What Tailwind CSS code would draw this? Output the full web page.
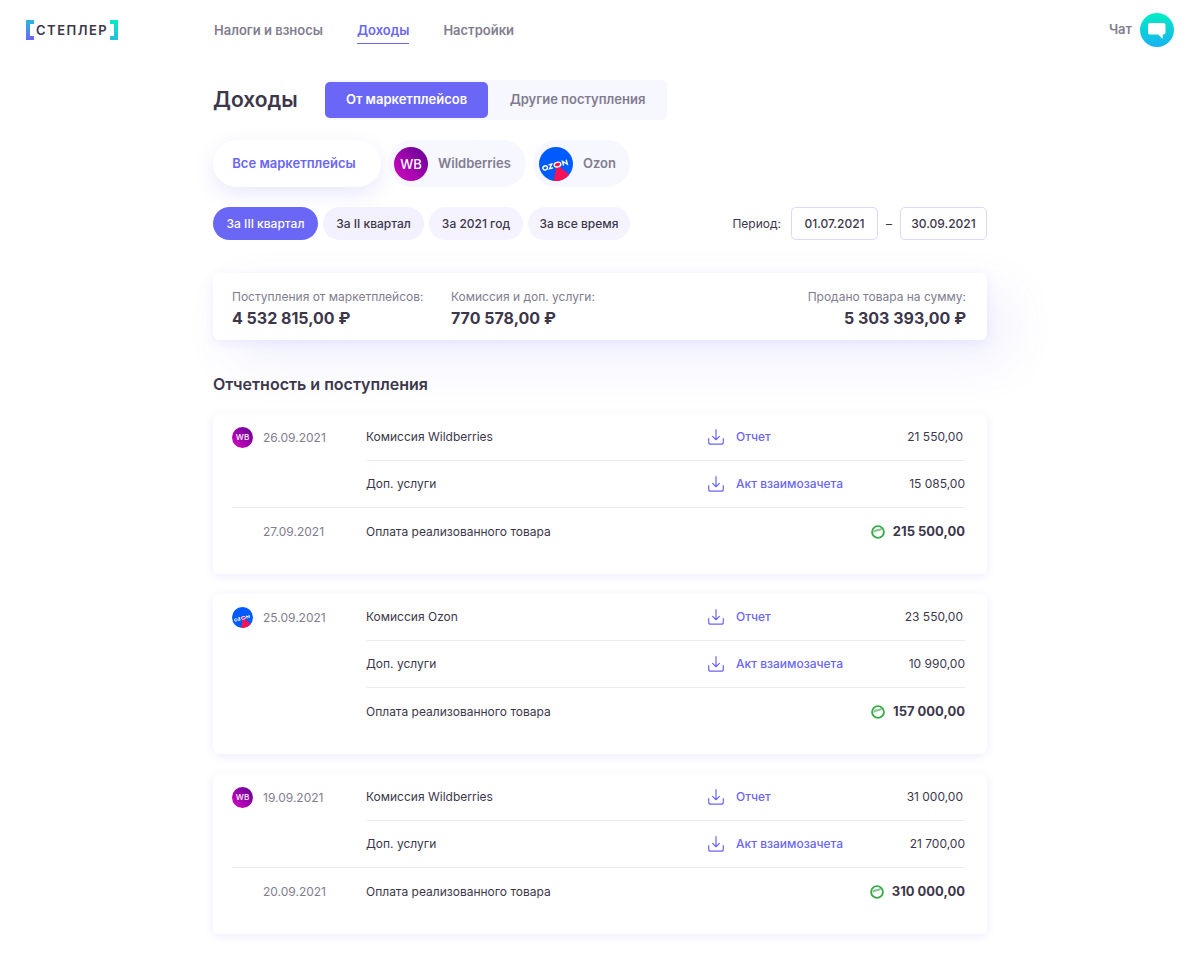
<!DOCTYPE html>
<html lang="ru">
<head>
<meta charset="utf-8">
<meta name="viewport" content="width=device-width, initial-scale=1">
<title>Степлер — Доходы</title>
<script src="https://cdn.jsdelivr.net/npm/@tailwindcss/browser@4"></script>
</head>
<body class="min-h-screen overflow-x-hidden bg-white font-['Inter','Liberation_Sans',sans-serif] text-[#3c374b]">

<!-- Shared icons -->
<svg class="absolute size-0" aria-hidden="true">
  <defs>
    <linearGradient id="wb-fill" x1="0" y1="1" x2="1" y2="0">
      <stop offset="0.1" stop-color="#cb06bd"/><stop offset="0.9" stop-color="#6c0298"/>
    </linearGradient>
    <clipPath id="round"><circle cx="17" cy="17" r="17"/></clipPath>
    <symbol id="wb" viewBox="0 0 34 34">
      <circle cx="17" cy="17" r="17" fill="url(#wb-fill)"/>
      <text x="17" y="21.700" text-anchor="middle" font-size="13" font-weight="500" fill="#fff">WB</text>
    </symbol>
    <symbol id="ozon" viewBox="0 0 34 34">
      <g clip-path="url(#round)">
        <rect width="34" height="34" fill="#005bff"/>
        <path d="M18 17.500 L30.500 28 V34 H14.500 Z" fill="#f91155"/>
        <ellipse cx="18.500" cy="17.600" rx="3.400" ry="2.300" fill="#f91155" stroke="#fff" stroke-width="1.300" transform="rotate(-12 18.500 17.600)"/>
        <g transform="rotate(-15 17 18)" fill="none" stroke="#fff" stroke-width="1.400">
          <ellipse cx="5.800" cy="18" rx="2.300" ry="2"/>
          <path d="M9.800 16h3.400l-3.400 4h3.700"/>
          <path d="M24.200 20.400v-4.200l4 3.800v-4.400"/>
        </g>
      </g>
    </symbol>
    <symbol id="download" viewBox="0 0 16 16">
      <path d="M8 .6v10M4.600 7.400 8 10.700l3.400-3.300M.7 9.500v3.700a2 2 0 0 0 2 2h10.600a2 2 0 0 0 2-2V9.500" fill="none" stroke="#6a66f6" stroke-width="1.200" stroke-linecap="round" stroke-linejoin="round"/>
    </symbol>
    <symbol id="bank" viewBox="0 0 14 14">
      <circle cx="7" cy="7" r="5.900" fill="#fff" stroke="#3bab4a" stroke-width="1.900"/>
      <path d="M2.500 6 C4.500 3.600 7 5 10.200 3L11 4.500C8.500 7 5.500 5.400 2.600 8Z" fill="#3bab4a" fill-opacity="0.650"/>
    </symbol>
  </defs>
</svg>

<header class="flex h-[60px] items-center px-[26px]">
  <a href="#" class="flex w-[188px] shrink-0 items-center" aria-label="Степлер">
    <svg class="h-5 w-[92px]" viewBox="0 0 92 20">
      <defs>
        <linearGradient id="logo-left" x1="0" y1="0" x2="0" y2="1"><stop offset="0.100" stop-color="#2cb4e0"/><stop offset="1" stop-color="#6a66f6"/></linearGradient>
        <linearGradient id="logo-right" x1="0" y1="0" x2="0" y2="1"><stop offset="0.100" stop-color="#05e8c5"/><stop offset="1" stop-color="#28bddd"/></linearGradient>
      </defs>
      <path d="M0 0h8v4H4v12h4v4H0Z" fill="url(#logo-left)"/>
      <path d="M92 0h-8v4h4v12h-4v4h8Z" fill="url(#logo-right)"/>
      <text x="10" y="14.500" font-size="13" font-weight="600" letter-spacing="1.500" fill="#3c374b">СТЕПЛЕР</text>
    </svg>
  </a>
  <nav class="flex gap-[34px] text-[13px] font-semibold text-[#817d8f]">
    <a href="#" class="border-b border-transparent leading-[26px]">Налоги и взносы</a>
    <a href="#" aria-current="page" class="border-b border-[#6a66f6] leading-[26px] text-[#6a66f6]">Доходы</a>
    <a href="#" class="border-b border-transparent leading-[26px]">Настройки</a>
  </nav>
  <a href="#" class="ml-auto flex items-center gap-2 text-[13px] font-semibold text-[#817d8f]">
    Чат
    <svg class="size-[34px]" viewBox="0 0 34 34" aria-hidden="true">
      <defs><linearGradient id="chat-fill" x1="0" y1="0" x2="0" y2="1"><stop offset="0" stop-color="#03eec2"/><stop offset="1" stop-color="#16b2f2"/></linearGradient></defs>
      <circle cx="17" cy="17" r="17" fill="url(#chat-fill)"/>
      <path d="M10 10h13.500a2 2 0 0 1 2 2v7.500a2 2 0 0 1-2 2h-.8v4.500L18.200 21.500H10a2 2 0 0 1-2-2V12a2 2 0 0 1 2-2Z" fill="#fff"/>
    </svg>
  </a>
</header>

<main class="mx-auto max-w-[774px] pt-5 pb-8">
  <div class="flex items-center">
    <h1 class="w-28 text-[21px] leading-10 font-semibold">Доходы</h1>
    <div class="flex h-10 items-center rounded-md bg-[#f7f7ff] text-[13px] font-semibold">
      <button class="h-9 w-[163px] rounded-[5px] bg-[#6a66f6] text-white">От маркетплейсов</button>
      <button class="h-9 w-[179px] text-[#817d8f]">Другие поступления</button>
    </div>
  </div>

  <div class="mt-5 flex gap-[7px] text-[13px] font-semibold text-[#817d8f]">
    <button class="h-[47px] w-[168px] rounded-full bg-white pr-1.5 text-[#6a66f6] shadow-[0_7px_20px_rgba(106,102,246,0.15)]">Все маркетплейсы</button>
    <button class="flex h-[47px] w-[138px] items-center gap-2.5 rounded-full bg-[#f7f7ff] pl-1.5"><svg class="size-[34px]" aria-hidden="true"><use href="#wb"/></svg>Wildberries</button>
    <button class="flex h-[47px] w-[97px] items-center gap-2.5 rounded-full bg-[#f7f7ff] pl-1.5"><svg class="size-[34px]" aria-hidden="true"><use href="#ozon"/></svg>Ozon</button>
  </div>

  <div class="mt-5 flex items-center justify-between text-[12px]">
    <div class="flex gap-[5px] font-medium">
      <button class="h-[33px] w-[105px] rounded-full bg-[#6a66f6] text-white">За III квартал</button>
      <button class="h-[33px] w-[101px] rounded-full bg-[#f3f1fe]">За II квартал</button>
      <button class="h-[33px] w-[94px] rounded-full bg-[#f5f3ff]">За 2021 год</button>
      <button class="h-[33px] w-[102px] rounded-full bg-[#f5f3ff]">За все время</button>
    </div>
    <div class="flex items-center">
      <label for="from" class="mr-2.5">Период:</label>
      <input id="from" type="text" value="01.07.2021" class="h-[33px] w-[87px] rounded-[5px] border border-[#dad8fd] text-center font-medium">
      <span class="w-[22px] text-center">–</span>
      <input id="to" type="text" aria-label="Конец периода" value="30.09.2021" class="h-[33px] w-[87px] rounded-[5px] border border-[#dad8fd] text-center font-medium">
    </div>
  </div>

  <dl class="mt-[33px] flex rounded-md bg-white pr-[21px] pl-[19px] pt-3.5 pb-2.5 shadow-[0_3px_12px_rgba(106,102,246,0.1),20px_20px_50px_rgba(106,102,246,0.1)]">
    <div class="w-[219px]">
      <dt class="text-[12px] leading-5 text-[#817d8f]">Поступления от маркетплейсов:</dt>
      <dd class="text-[16px] leading-[23px] font-bold">4 532 815,00 ₽</dd>
    </div>
    <div>
      <dt class="text-[12px] leading-5 text-[#817d8f]">Комиссия и доп. услуги:</dt>
      <dd class="text-[16px] leading-[23px] font-bold">770 578,00 ₽</dd>
    </div>
    <div class="ml-auto text-right">
      <dt class="text-[12px] leading-5 text-[#817d8f]">Продано товара на сумму:</dt>
      <dd class="text-[16px] leading-[23px] font-bold">5 303 393,00 ₽</dd>
    </div>
  </dl>

  <h2 class="mt-8 mb-[18px] text-[16px] leading-6 font-semibold">Отчетность и поступления</h2>

  <div class="flex flex-col gap-5 text-[12px]">
    <section class="rounded-md bg-white pr-[22px] pb-[19px] pl-[19px] shadow-[0_2px_10px_rgba(106,102,246,0.12)]">
      <table class="w-full table-fixed border-separate border-spacing-0">
        <colgroup><col class="w-[134px]"><col><col class="w-[133px]"><col class="w-[124px]"></colgroup>
        <tr class="h-[47px]">
          <td class="text-[#817d8f]"><div class="flex items-center gap-2.5"><svg class="size-[21px]" aria-hidden="true"><use href="#wb"/></svg>26.09.2021</div></td>
          <td class="border-b border-[#ededf0]">Комиссия Wildberries</td>
          <td class="border-b border-[#ededf0]"><a href="#" class="flex items-center gap-3 font-medium whitespace-nowrap text-[#6a66f6]"><svg class="size-4 shrink-0" aria-hidden="true"><use href="#download"/></svg>Отчет</a></td>
          <td class="border-b border-[#ededf0] pr-0.5 text-right">21 550,00</td>
        </tr>
        <tr class="h-[47px]">
          <td class="border-b border-[#ededf0]"></td>
          <td class="border-b border-[#ededf0]">Доп. услуги</td>
          <td class="border-b border-[#ededf0]"><a href="#" class="flex items-center gap-3 font-medium whitespace-nowrap text-[#6a66f6]"><svg class="size-4 shrink-0" aria-hidden="true"><use href="#download"/></svg>Акт взаимозачета</a></td>
          <td class="border-b border-[#ededf0] text-right">15 085,00</td>
        </tr>
        <tr class="h-[47px]">
          <td class="pl-[31px] text-[#817d8f]">27.09.2021</td>
          <td>Оплата реализованного товара</td>
          <td></td>
          <td><div class="flex items-center justify-end gap-2 text-[13px] font-bold"><svg class="size-3.5" aria-hidden="true"><use href="#bank"/></svg>215 500,00</div></td>
        </tr>
      </table>
    </section>

    <section class="rounded-md bg-white pr-[22px] pb-[19px] pl-[19px] shadow-[0_2px_10px_rgba(106,102,246,0.12)]">
      <table class="w-full table-fixed border-separate border-spacing-0">
        <colgroup><col class="w-[134px]"><col><col class="w-[133px]"><col class="w-[124px]"></colgroup>
        <tr class="h-[47px]">
          <td class="text-[#817d8f]"><div class="flex items-center gap-2.5"><svg class="size-[21px]" aria-hidden="true"><use href="#ozon"/></svg>25.09.2021</div></td>
          <td class="border-b border-[#ededf0]">Комиссия Ozon</td>
          <td class="border-b border-[#ededf0]"><a href="#" class="flex items-center gap-3 font-medium whitespace-nowrap text-[#6a66f6]"><svg class="size-4 shrink-0" aria-hidden="true"><use href="#download"/></svg>Отчет</a></td>
          <td class="border-b border-[#ededf0] pr-0.5 text-right">23 550,00</td>
        </tr>
        <tr class="h-[47px]">
          <td></td>
          <td class="border-b border-[#ededf0]">Доп. услуги</td>
          <td class="border-b border-[#ededf0]"><a href="#" class="flex items-center gap-3 font-medium whitespace-nowrap text-[#6a66f6]"><svg class="size-4 shrink-0" aria-hidden="true"><use href="#download"/></svg>Акт взаимозачета</a></td>
          <td class="border-b border-[#ededf0] text-right">10 990,00</td>
        </tr>
        <tr class="h-[47px]">
          <td></td>
          <td>Оплата реализованного товара</td>
          <td></td>
          <td><div class="flex items-center justify-end gap-2 text-[13px] font-bold"><svg class="size-3.5" aria-hidden="true"><use href="#bank"/></svg>157 000,00</div></td>
        </tr>
      </table>
    </section>

    <section class="rounded-md bg-white pr-[22px] pb-[19px] pl-[19px] shadow-[0_2px_10px_rgba(106,102,246,0.12)]">
      <table class="w-full table-fixed border-separate border-spacing-0">
        <colgroup><col class="w-[134px]"><col><col class="w-[133px]"><col class="w-[124px]"></colgroup>
        <tr class="h-[47px]">
          <td class="text-[#817d8f]"><div class="flex items-center gap-2.5"><svg class="size-[21px]" aria-hidden="true"><use href="#wb"/></svg>19.09.2021</div></td>
          <td class="border-b border-[#ededf0]">Комиссия Wildberries</td>
          <td class="border-b border-[#ededf0]"><a href="#" class="flex items-center gap-3 font-medium whitespace-nowrap text-[#6a66f6]"><svg class="size-4 shrink-0" aria-hidden="true"><use href="#download"/></svg>Отчет</a></td>
          <td class="border-b border-[#ededf0] pr-0.5 text-right">31 000,00</td>
        </tr>
        <tr class="h-[47px]">
          <td class="border-b border-[#ededf0]"></td>
          <td class="border-b border-[#ededf0]">Доп. услуги</td>
          <td class="border-b border-[#ededf0]"><a href="#" class="flex items-center gap-3 font-medium whitespace-nowrap text-[#6a66f6]"><svg class="size-4 shrink-0" aria-hidden="true"><use href="#download"/></svg>Акт взаимозачета</a></td>
          <td class="border-b border-[#ededf0] text-right">21 700,00</td>
        </tr>
        <tr class="h-[47px]">
          <td class="pl-[31px] text-[#817d8f]">20.09.2021</td>
          <td>Оплата реализованного товара</td>
          <td></td>
          <td><div class="flex items-center justify-end gap-2 text-[13px] font-bold"><svg class="size-3.5" aria-hidden="true"><use href="#bank"/></svg>310 000,00</div></td>
        </tr>
      </table>
    </section>
  </div>
</main>
</body>
</html>
